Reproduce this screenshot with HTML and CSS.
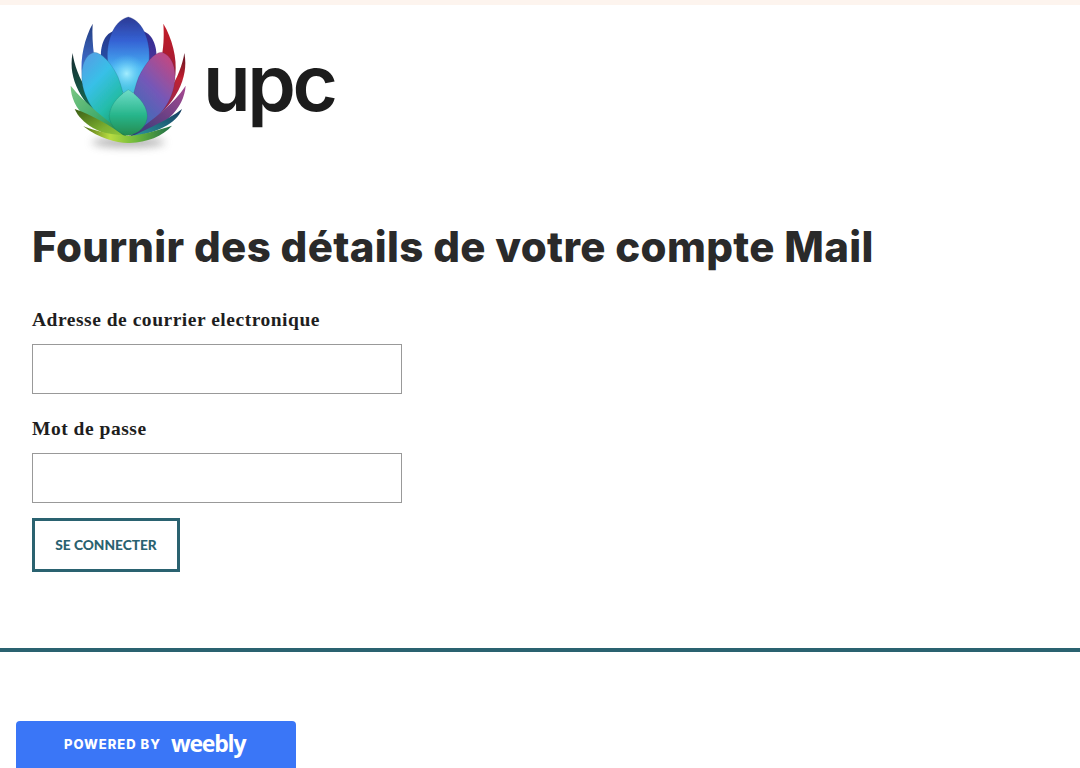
FILE: index.html
```html
<!doctype html>
<html lang="fr">
  <head>
    <meta charset="UTF-8">
    <meta name="viewport" content="width=device-width, initial-scale=1.0">
    <title>Fournir des détails de votre compte Mail</title>
    <link rel="stylesheet" href="styles.css">
  </head>
  <body>
    <div class="top-strip"></div>
    <!-- Logo -->
    <header class="site-header">
      <div class="logo">
        <svg class="logo-mark" width="120" height="150" viewBox="60 40 360 450" xmlns="http://www.w3.org/2000/svg">
          <defs>
            <linearGradient id="g-center" x1="0" y1="0" x2="0" y2="1">
              <stop offset="0%" stop-color="#2c3a94"/>
              <stop offset="30%" stop-color="#3562d4"/>
              <stop offset="65%" stop-color="#48b4f4"/>
              <stop offset="100%" stop-color="#3fc4d6"/>
            </linearGradient>
            <linearGradient id="g-back-left" x1="0" y1="0" x2="0" y2="1">
              <stop offset="0%" stop-color="#24388c"/>
              <stop offset="100%" stop-color="#2f6cc8"/>
            </linearGradient>
            <linearGradient id="g-back-right" x1="0" y1="0" x2="0" y2="1">
              <stop offset="0%" stop-color="#2e2e90"/>
              <stop offset="100%" stop-color="#7034a8"/>
            </linearGradient>
            <linearGradient id="g-out-blue" x1="0" y1="0" x2="0" y2="1">
              <stop offset="0%" stop-color="#243c80"/>
              <stop offset="40%" stop-color="#4070d0"/>
              <stop offset="100%" stop-color="#58a8e8"/>
            </linearGradient>
            <linearGradient id="g-red" x1="0" y1="0" x2="0" y2="1">
              <stop offset="0%" stop-color="#c41c28"/>
              <stop offset="45%" stop-color="#a01c34"/>
              <stop offset="100%" stop-color="#6c2060"/>
            </linearGradient>
            <linearGradient id="g-side-red" x1="0" y1="0" x2="0" y2="1">
              <stop offset="0%" stop-color="#5c1420"/>
              <stop offset="30%" stop-color="#c02030"/>
              <stop offset="100%" stop-color="#703070"/>
            </linearGradient>
            <linearGradient id="g-mid-left" x1="0" y1="0" x2="0.6" y2="1">
              <stop offset="0%" stop-color="#5a98e4"/>
              <stop offset="40%" stop-color="#38c0e8"/>
              <stop offset="75%" stop-color="#24bca8"/>
              <stop offset="100%" stop-color="#1a9c70"/>
            </linearGradient>
            <linearGradient id="g-mid-right" x1="0.8" y1="0" x2="0.2" y2="1">
              <stop offset="0%" stop-color="#c44880"/>
              <stop offset="45%" stop-color="#7458b8"/>
              <stop offset="100%" stop-color="#2c74b4"/>
            </linearGradient>
            <linearGradient id="g-front" x1="0" y1="0" x2="0" y2="1">
              <stop offset="0%" stop-color="#70dcc8"/>
              <stop offset="55%" stop-color="#28b68c"/>
              <stop offset="100%" stop-color="#248c50"/>
            </linearGradient>
            <linearGradient id="g-out-left" x1="0" y1="0" x2="0.6" y2="1">
              <stop offset="0%" stop-color="#142c30"/>
              <stop offset="50%" stop-color="#14604c"/>
              <stop offset="100%" stop-color="#2ca070"/>
            </linearGradient>
            <linearGradient id="g-low-left" x1="0" y1="0" x2="1" y2="1">
              <stop offset="0%" stop-color="#7cc884"/>
              <stop offset="60%" stop-color="#3ca868"/>
              <stop offset="100%" stop-color="#1f7a48"/>
            </linearGradient>
            <linearGradient id="g-olive" x1="0" y1="0" x2="1" y2="1">
              <stop offset="0%" stop-color="#3a5c14"/>
              <stop offset="60%" stop-color="#7cb030"/>
              <stop offset="100%" stop-color="#94cc40"/>
            </linearGradient>
            <linearGradient id="g-yellow" x1="0" y1="0" x2="1" y2="0">
              <stop offset="0%" stop-color="#506e14"/>
              <stop offset="30%" stop-color="#b8dc40"/>
              <stop offset="60%" stop-color="#6cb83c"/>
              <stop offset="100%" stop-color="#1c6c48"/>
            </linearGradient>
            <linearGradient id="g-right-purple" x1="1" y1="0" x2="0" y2="1">
              <stop offset="0%" stop-color="#a84890"/>
              <stop offset="100%" stop-color="#2a3a78"/>
            </linearGradient>
            <linearGradient id="g-right-teal" x1="1" y1="0" x2="0" y2="1">
              <stop offset="0%" stop-color="#163c60"/>
              <stop offset="100%" stop-color="#2c9ca0"/>
            </linearGradient>
            <radialGradient id="g-glow">
              <stop offset="0%" stop-color="#a8f0ff" stop-opacity="0.95"/>
              <stop offset="100%" stop-color="#58ccf4" stop-opacity="0"/>
            </radialGradient>
            <filter id="blur-shadow" x="-30%" y="-100%" width="160%" height="300%">
              <feGaussianBlur stdDeviation="12"/>
            </filter>
            <filter id="soft" x="-5%" y="-5%" width="110%" height="110%">
              <feGaussianBlur stdDeviation="1.4"/>
            </filter>
          </defs>
          <ellipse cx="235" cy="428" rx="110" ry="14" fill="#777" opacity="0.6" filter="url(#blur-shadow)"/>
          <g filter="url(#soft)">
            <!-- back row -->
            <path d="M128 72 C104 115 90 175 96 225 C104 290 150 350 235 400 L200 240 L132 165 C128 135 126 100 128 72Z" fill="url(#g-out-blue)"/>
            <path d="M340 72 C366 115 382 175 376 225 C368 290 320 350 235 400 L270 240 L336 165 C342 135 342 100 340 72Z" fill="url(#g-red)"/>
            <path d="M190 95 C160 105 148 145 154 190 L205 295 L235 170Z" fill="url(#g-back-left)"/>
            <path d="M280 95 C310 105 324 145 318 190 L265 295 L235 170Z" fill="url(#g-back-right)"/>
            <path d="M235 52 C198 60 172 110 172 168 C172 220 198 270 235 290 C272 270 298 220 298 168 C298 110 272 60 235 52Z" fill="url(#g-center)" stroke="#1c2c70" stroke-opacity="0.3" stroke-width="2"/>
            <ellipse cx="230" cy="222" rx="58" ry="58" fill="url(#g-glow)"/>
            <!-- outer sides -->
            <path d="M68 160 C52 235 92 335 235 410 L112 275 C88 235 72 195 68 160Z" fill="url(#g-out-left)"/>
            <path d="M403 160 C418 235 378 335 235 410 L358 275 C382 235 398 195 403 160Z" fill="url(#g-side-red)"/>
            <!-- middle row -->
            <path d="M132 158 C98 168 90 215 98 258 C112 325 165 380 232 400 C232 335 222 280 204 232 C185 192 155 158 132 158Z" fill="url(#g-mid-left)" stroke="#123c50" stroke-opacity="0.25" stroke-width="2"/>
            <path d="M335 158 C369 168 382 215 372 260 C358 328 305 380 238 400 C238 335 248 280 266 232 C286 192 312 158 335 158Z" fill="url(#g-mid-right)" stroke="#2c1c58" stroke-opacity="0.25" stroke-width="2"/>
            <!-- lower sides -->
            <path d="M62 258 C62 325 125 395 235 412 C170 360 105 312 62 258Z" fill="url(#g-low-left)"/>
            <path d="M407 258 C402 325 345 390 235 412 C310 360 372 312 407 258Z" fill="url(#g-right-purple)"/>
            <path d="M396 328 C380 372 320 400 240 412 C300 385 355 360 396 328Z" fill="url(#g-right-teal)"/>
            <!-- front -->
            <path d="M235 270 C215 282 180 310 178 348 C178 378 205 404 235 407 C265 404 292 378 292 348 C290 310 255 282 235 270Z" fill="url(#g-front)" stroke="#0e5c50" stroke-opacity="0.25" stroke-width="2"/>
            <path d="M74 328 C92 370 150 408 232 416 C180 375 122 345 74 328Z" fill="url(#g-olive)"/>
            <path d="M100 380 C150 418 205 432 240 430 C290 428 338 410 366 378 C322 392 285 404 240 408 C190 408 145 396 100 380Z" fill="url(#g-yellow)"/>
          </g>
        </svg>
        <span class="logo-word">upc</span>
      </div>
    </header>
    <main class="content">
      <h1 class="page-title">Fournir des détails de votre compte Mail</h1>
      <form class="login-form">
        <label class="field-label" for="email">Adresse de courrier electronique</label>
        <input class="field-input" id="email" type="text">
        <label class="field-label" for="password">Mot de passe</label>
        <input class="field-input" id="password" type="password">
        <button class="submit-btn" type="button">SE CONNECTER</button>
      </form>
    </main>
    <div class="footer-rule"></div>
    <!-- Weebly badge -->
    <a class="weebly-badge" href="#">
      <span class="badge-label">POWERED BY</span>
      <span class="badge-brand">weebly</span>
    </a>
  </body>
</html>
```

FILE: styles.css
```css
body {
  font-family: "Liberation Serif", serif;
  background: #fff;
  color: #222;
  margin: 0;
  padding: 0;
  height: 768px;
  overflow: hidden;
}
.top-strip {
  height: 5px;
  background: #fdf4ee;
}
/* Logo */
.site-header {
  padding: 8px 0 0 70px;
}
.logo {
  display: flex;
  align-items: flex-start;
  gap: 13px;
  height: 154px;
}
.logo-mark {
  display: block;
  flex: none;
}
.logo-word {
  font-family: "Inter", sans-serif;
  font-size: 78px;
  font-weight: 600;
  letter-spacing: -3.5px;
  line-height: 1;
  color: #1c1c1c;
  margin-top: 31px;
}
/* Form block */
.content {
  padding: 52px 32px 0;
}
.page-title {
  font-family: "Inter", sans-serif;
  font-size: 42px;
  font-weight: 800;
  letter-spacing: 0.32px;
  line-height: 56px;
  color: #2a2a2a;
  margin: 0;
}
.login-form {
  display: flex;
  flex-direction: column;
  align-items: flex-start;
  margin-top: 33px;
}
.field-label {
  font-family: "Liberation Serif", serif;
  font-size: 19.5px;
  font-weight: 700;
  letter-spacing: 0.52px;
  line-height: 24px;
  color: #1e1e1e;
  margin-bottom: 12px;
}
.field-input {
  box-sizing: border-box;
  width: 370px;
  height: 50px;
  border: 1px solid #999;
  background: #fff;
  margin: 0 0 23px;
  padding: 0 10px;
}
.field-input:last-of-type {
  margin-bottom: 15px;
}
.submit-btn {
  box-sizing: border-box;
  width: 148px;
  height: 54px;
  border: 3px solid #2a6270;
  background: #fff;
  color: #2a6270;
  font-family: "Lato", sans-serif;
  font-size: 13.7px;
  font-weight: 900;
  padding: 0 0 2px;
}
.footer-rule {
  height: 4px;
  background: #2a6270;
  margin-top: 76px;
}
/* Fixed badge at the bottom */
.weebly-badge {
  position: fixed;
  left: 16px;
  bottom: 0;
  width: 280px;
  height: 47px;
  box-sizing: border-box;
  padding-left: 48px;
  padding-bottom: 2px;
  display: flex;
  align-items: center;
  gap: 10px;
  background: #3a76f7;
  border-radius: 4px 4px 0 0;
  color: #fff;
  text-decoration: none;
}
.badge-label {
  font-family: "Inter", sans-serif;
  font-size: 13px;
  font-weight: 800;
  letter-spacing: 1px;
}
.badge-brand {
  font-family: "Open Sans", sans-serif;
  font-size: 23px;
  font-weight: 700;
  letter-spacing: -1.2px;
  line-height: 1;
}
```
